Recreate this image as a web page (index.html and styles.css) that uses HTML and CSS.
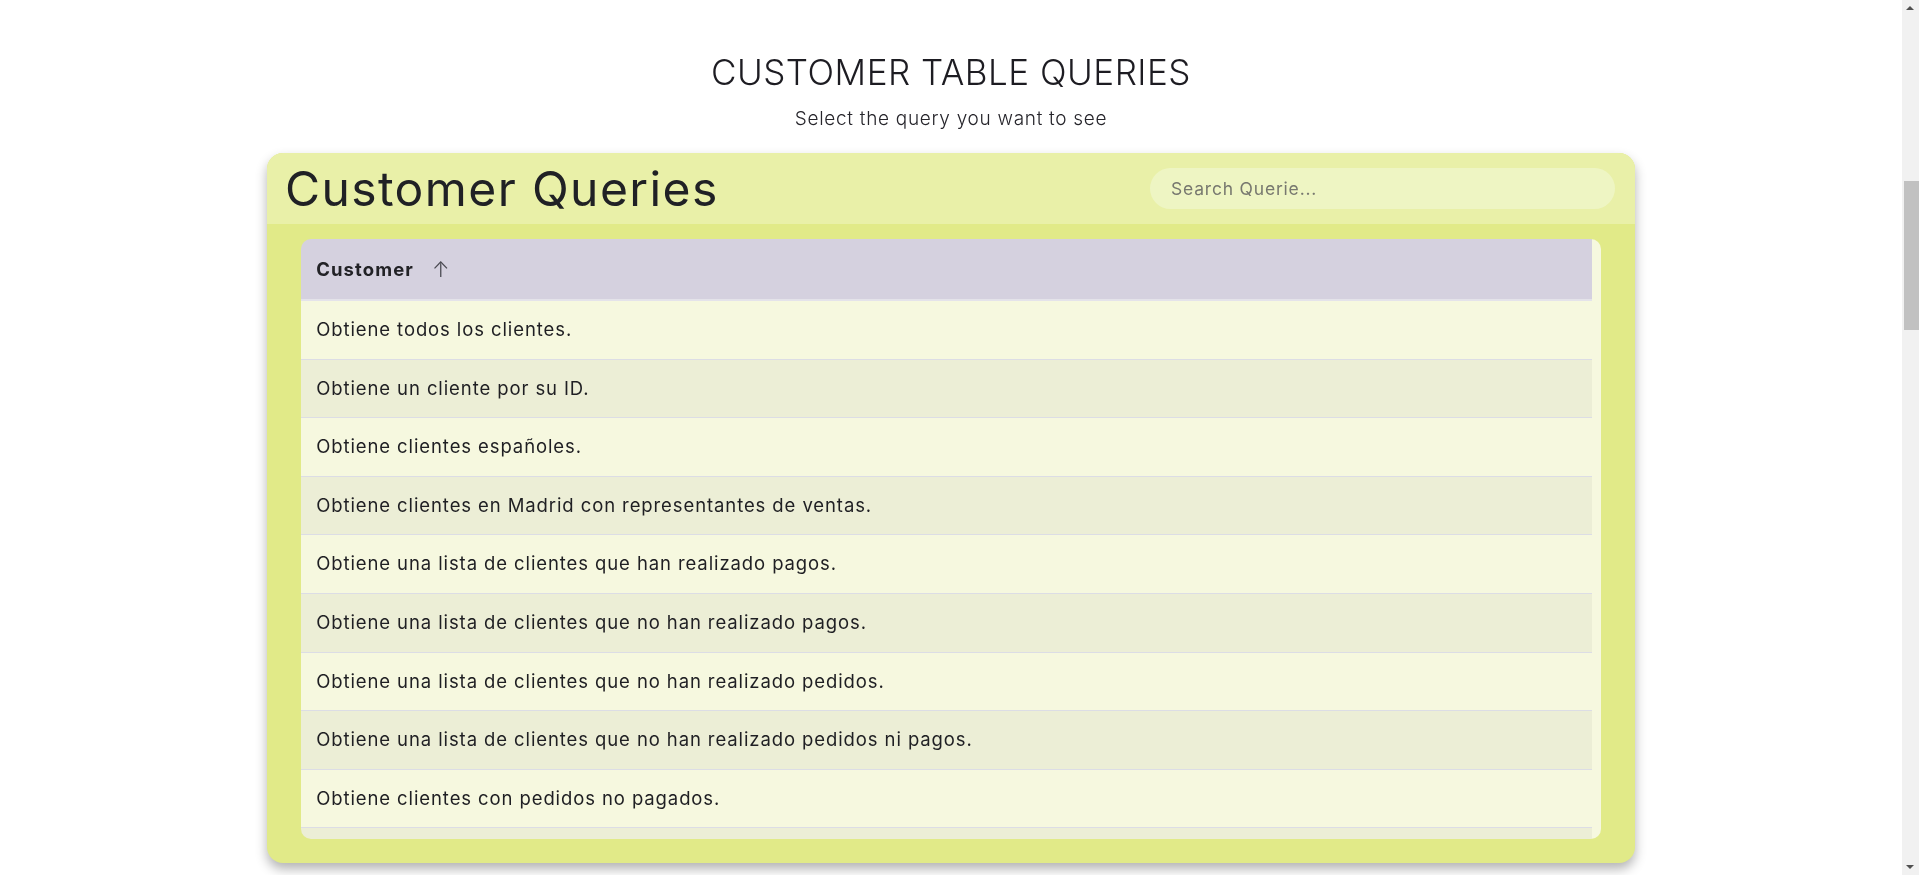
FILE: index.html
```html
<!DOCTYPE html>
<html lang="es">
<head>
<meta charset="utf-8">
<title>Customer Table Queries</title>
<link rel="stylesheet" href="styles.css">
</head>
<body>
<main class="page">
  <header class="intro">
    <h1 class="intro-title">CUSTOMER TABLE QUERIES</h1>
    <p class="intro-sub">Select the query you want to see</p>
  </header>

  <section class="card">
    <div class="card-head">
      <h2 class="card-title">Customer Queries</h2>
      <input class="search" type="text" placeholder="Search Querie...">
    </div>
    <div class="card-body">
      <div class="table-wrap">
        <table class="queries">
          <thead>
            <tr><th><span class="th-label">Customer</span><span class="sort">&uarr;</span></th></tr>
          </thead>
          <tbody>
            <tr><td>Obtiene todos los clientes.</td></tr>
            <tr><td>Obtiene un cliente por su ID.</td></tr>
            <tr><td>Obtiene clientes españoles.</td></tr>
            <tr><td>Obtiene clientes en Madrid con representantes de ventas.</td></tr>
            <tr><td>Obtiene una lista de clientes que han realizado pagos.</td></tr>
            <tr><td>Obtiene una lista de clientes que no han realizado pagos.</td></tr>
            <tr><td>Obtiene una lista de clientes que no han realizado pedidos.</td></tr>
            <tr><td>Obtiene una lista de clientes que no han realizado pedidos ni pagos.</td></tr>
            <tr><td>Obtiene clientes con pedidos no pagados.</td></tr>
            <tr><td>Obtiene clientes con sus representantes de ventas.</td></tr>
            <tr><td>Obtiene clientes con sus pagos.</td></tr>
          </tbody>
        </table>
      </div>
    </div>
  </section>
  <div class="after"></div>
</main>
<div class="page-scrollbar" aria-hidden="true">
  <span class="sb-arrow sb-up"></span>
  <span class="sb-thumb"></span>
  <span class="sb-arrow sb-down"></span>
</div>
</body>
</html>
```

FILE: styles.css
```css
* { box-sizing: border-box; }

html, body { margin: 0; padding: 0; }

body {
  padding-right: 17px;
  font-family: Inter, "Noto Sans", sans-serif;
  color: #1f1f23;
  background: #ffffff;
}

.page {
  padding-top: 51px;
}

.intro {
  text-align: center;
}

.intro-title {
  margin: 0;
  font-size: 35px;
  line-height: 42px;
  font-weight: 300;
  letter-spacing: 0.5px;
  color: #1d1c22;
}

.intro-sub {
  margin: 13px 0 21px;
  font-size: 19px;
  line-height: 26px;
  font-weight: 300;
  letter-spacing: 0.7px;
  color: #26252b;
}

.card {
  width: 1368px;
  margin: 0 auto;
  border-radius: 16px;
  overflow: hidden;
  box-shadow: 0 6px 12px rgba(0, 0, 0, 0.3);
  background: #e1ea88;
}

.card-head {
  height: 71px;
  display: flex;
  align-items: center;
  justify-content: space-between;
  padding: 0 20px 0 18px;
  background: #e9f0a8;
}

.card-title {
  margin: 0;
  font-size: 48px;
  line-height: 56px;
  font-weight: 400;
  letter-spacing: 1.4px;
  color: #202125;
}

.search {
  width: 465px;
  height: 41px;
  border: none;
  outline: none;
  border-radius: 21px;
  background: #eef5c3;
  padding: 0 21px;
  font-family: inherit;
  font-size: 17.5px;
  letter-spacing: 0.8px;
  color: #333;
}

.search::placeholder { color: #77786f; }

.card-body {
  height: 639px;
  padding: 15px 0 24px;
}

.table-wrap {
  width: 95%;
  height: 600px;
  margin: 0 auto;
  border-radius: 10px;
  background: #f6f8df;
  overflow-y: auto;
}

.table-wrap::-webkit-scrollbar { width: 9px; }
.table-wrap::-webkit-scrollbar-track { background: transparent; }
.table-wrap::-webkit-scrollbar-thumb { background: transparent; }

.queries {
  width: calc(100% - 9px);
  border-collapse: collapse;
  text-align: left;
}

.queries th {
  height: 61px;
  padding: 0 15px;
  background: #d5d1df;
  font-size: 18.5px;
  font-weight: 700;
  letter-spacing: 1.1px;
  color: #222226;
  border-bottom: 2px solid #e4e3ea;
}

.th-label { vertical-align: middle; }

.sort {
  display: inline-block;
  margin-left: 18px;
  font-weight: 300;
  font-size: 21px;
  color: #4a4a52;
  vertical-align: middle;
}

.queries td {
  padding: 16px 15px;
  font-size: 18.5px;
  line-height: 25.6px;
  letter-spacing: 0.9px;
  color: #1f1f23;
  border-bottom: 1px solid #dcdde5;
}

.queries tbody tr:nth-child(odd) td { background: #f6f8df; }
.queries tbody tr:nth-child(even) td { background: #eceed6; }

.after { height: 40px; }

/* imitation of the browser's page scrollbar seen in the screenshot */
.page-scrollbar {
  position: fixed;
  top: 0;
  right: 0;
  bottom: 0;
  width: 17px;
  background: #f1f1f1;
}

.sb-thumb {
  position: absolute;
  top: 181px;
  left: 2px;
  right: 0;
  height: 149px;
  background: #c1c1c1;
}

.sb-arrow {
  position: absolute;
  left: 4px;
  width: 0;
  height: 0;
  border-left: 4.5px solid transparent;
  border-right: 4.5px solid transparent;
}

.sb-up {
  top: 6px;
  border-bottom: 4.5px solid #505050;
}

.sb-down {
  bottom: 6px;
  border-top: 4.5px solid #505050;
}
```
